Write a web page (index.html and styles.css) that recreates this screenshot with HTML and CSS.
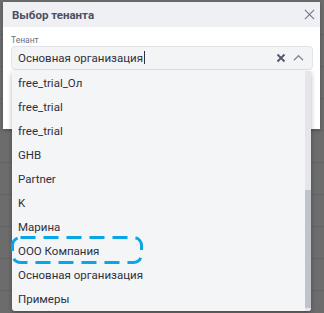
FILE: index.html
```html
<!DOCTYPE html>
<html lang="ru">
<head>
    <meta charset="UTF-8">
    <meta name="viewport" content="width=device-width, initial-scale=1.0">
    <title>Выбор тенанта</title>
    <link rel="stylesheet" href="styles.css">
</head>
<body>
    <div class="modal">
        <div class="modal-header">
            <span class="modal-title">Выбор тенанта</span>
            <svg class="close-icon" viewBox="0 0 12 12" aria-hidden="true">
                <path d="M1 1L11 11M11 1L1 11"></path>
            </svg>
        </div>
        <div class="modal-body">
            <label class="field-label">Тенант</label>
            <div class="select">
                <span class="select-value">Основная организация<span class="caret"></span></span>
                <svg class="clear-icon" viewBox="0 0 10 10" aria-hidden="true">
                    <path d="M1.5 1.5L8.5 8.5M8.5 1.5L1.5 8.5"></path>
                </svg>
                <svg class="chevron-icon" viewBox="0 0 12 8" aria-hidden="true">
                    <path d="M1 6.5L6 1.5L11 6.5"></path>
                </svg>

                <div class="dropdown">
                    <ul class="options">
                        <li>free_trial_Ол</li>
                        <li>free_trial</li>
                        <li>free_trial</li>
                        <li>GHB</li>
                        <li>Partner</li>
                        <li>K</li>
                        <li>Марина</li>
                        <li>ООО Компания</li>
                        <li>Основная организация</li>
                        <li>Примеры</li>
                    </ul>
                    <div class="scrollbar"><div class="scroll-thumb"></div></div>
                </div>
            </div>
        </div>
    </div>

    <!-- annotation around the selected row -->
    <svg class="highlight" viewBox="0 0 132 28" aria-hidden="true">
        <rect x="1.5" y="1.5" width="129" height="25" rx="8"></rect>
    </svg>
</body>
</html>
```

FILE: styles.css
```css
body {
    margin: 0;
    width: 324px;
    height: 313px;
    overflow: hidden;
    position: relative;
    font-family: Roboto, 'Noto Sans', sans-serif;
    background-color: #6c6c6c;
    background-image: repeating-linear-gradient(to bottom, transparent 0, transparent 31px, #646464 31px, #646464 32px);
    background-position: 0 3px;
}

.modal {
    margin: 2px 0 0 3px;
    width: 317px;
    height: 127px;
    background-color: #ffffff;
    box-shadow: 0 1px 4px rgba(0, 0, 0, 0.25);
}

.modal-header {
    height: 25px;
    background-color: #eef0f3;
    display: flex;
    align-items: center;
    justify-content: space-between;
    padding: 0 5px 0 9px;
}

.modal-title {
    font-size: 11.5px;
    font-weight: 700;
    color: #4a4f63;
}

.close-icon {
    width: 11px;
    height: 11px;
    stroke: #70748a;
    stroke-width: 1.2;
    fill: none;
}

.modal-body {
    padding: 8px 7px 0 8px;
}

.field-label {
    display: block;
    font-size: 8.5px;
    line-height: 11px;
    color: #6b6f80;
}

.select {
    position: relative;
    height: 22px;
    display: flex;
    align-items: center;
    padding: 0 8px 0 6px;
    background-color: #f3f4f6;
    border: 1px solid #e1e3e8;
    border-radius: 4px;
}

.select-value {
    flex: 1;
    font-size: 11.5px;
    color: #2e303d;
}

.caret {
    display: inline-block;
    width: 1px;
    height: 13px;
    margin-left: 1px;
    vertical-align: -2px;
    background-color: #2e303d;
}

.clear-icon {
    width: 10px;
    height: 10px;
    margin-right: 7px;
    stroke: #50556a;
    stroke-width: 1.8;
    fill: none;
}

.chevron-icon {
    width: 11px;
    height: 8px;
    stroke: #80849a;
    stroke-width: 1.3;
    fill: none;
}

.dropdown {
    position: absolute;
    top: 24px;
    left: 0;
    width: 299px;
    height: 240px;
    overflow: hidden;
    background-color: #f4f5f7;
    border-radius: 0 0 3px 3px;
    box-shadow: 0 2px 5px rgba(0, 0, 0, 0.3);
}

.options {
    list-style: none;
    margin: 0;
    padding: 0;
}

.options li {
    height: 24px;
    line-height: 24px;
    padding-left: 6px;
    font-size: 11.5px;
    color: #2e303d;
}

.scrollbar {
    position: absolute;
    top: 0;
    right: 0;
    bottom: 0;
    width: 6px;
    background-color: #e4e6ea;
}

.scroll-thumb {
    position: absolute;
    top: 119px;
    bottom: 3px;
    left: 0;
    right: 0;
    background-color: #bfc3cc;
}

.highlight {
    position: absolute;
    left: 11px;
    top: 236px;
    width: 132px;
    height: 28px;
}

.highlight rect {
    fill: none;
    stroke: #08a6e6;
    stroke-width: 3;
    stroke-dasharray: 15 8;
}
```
